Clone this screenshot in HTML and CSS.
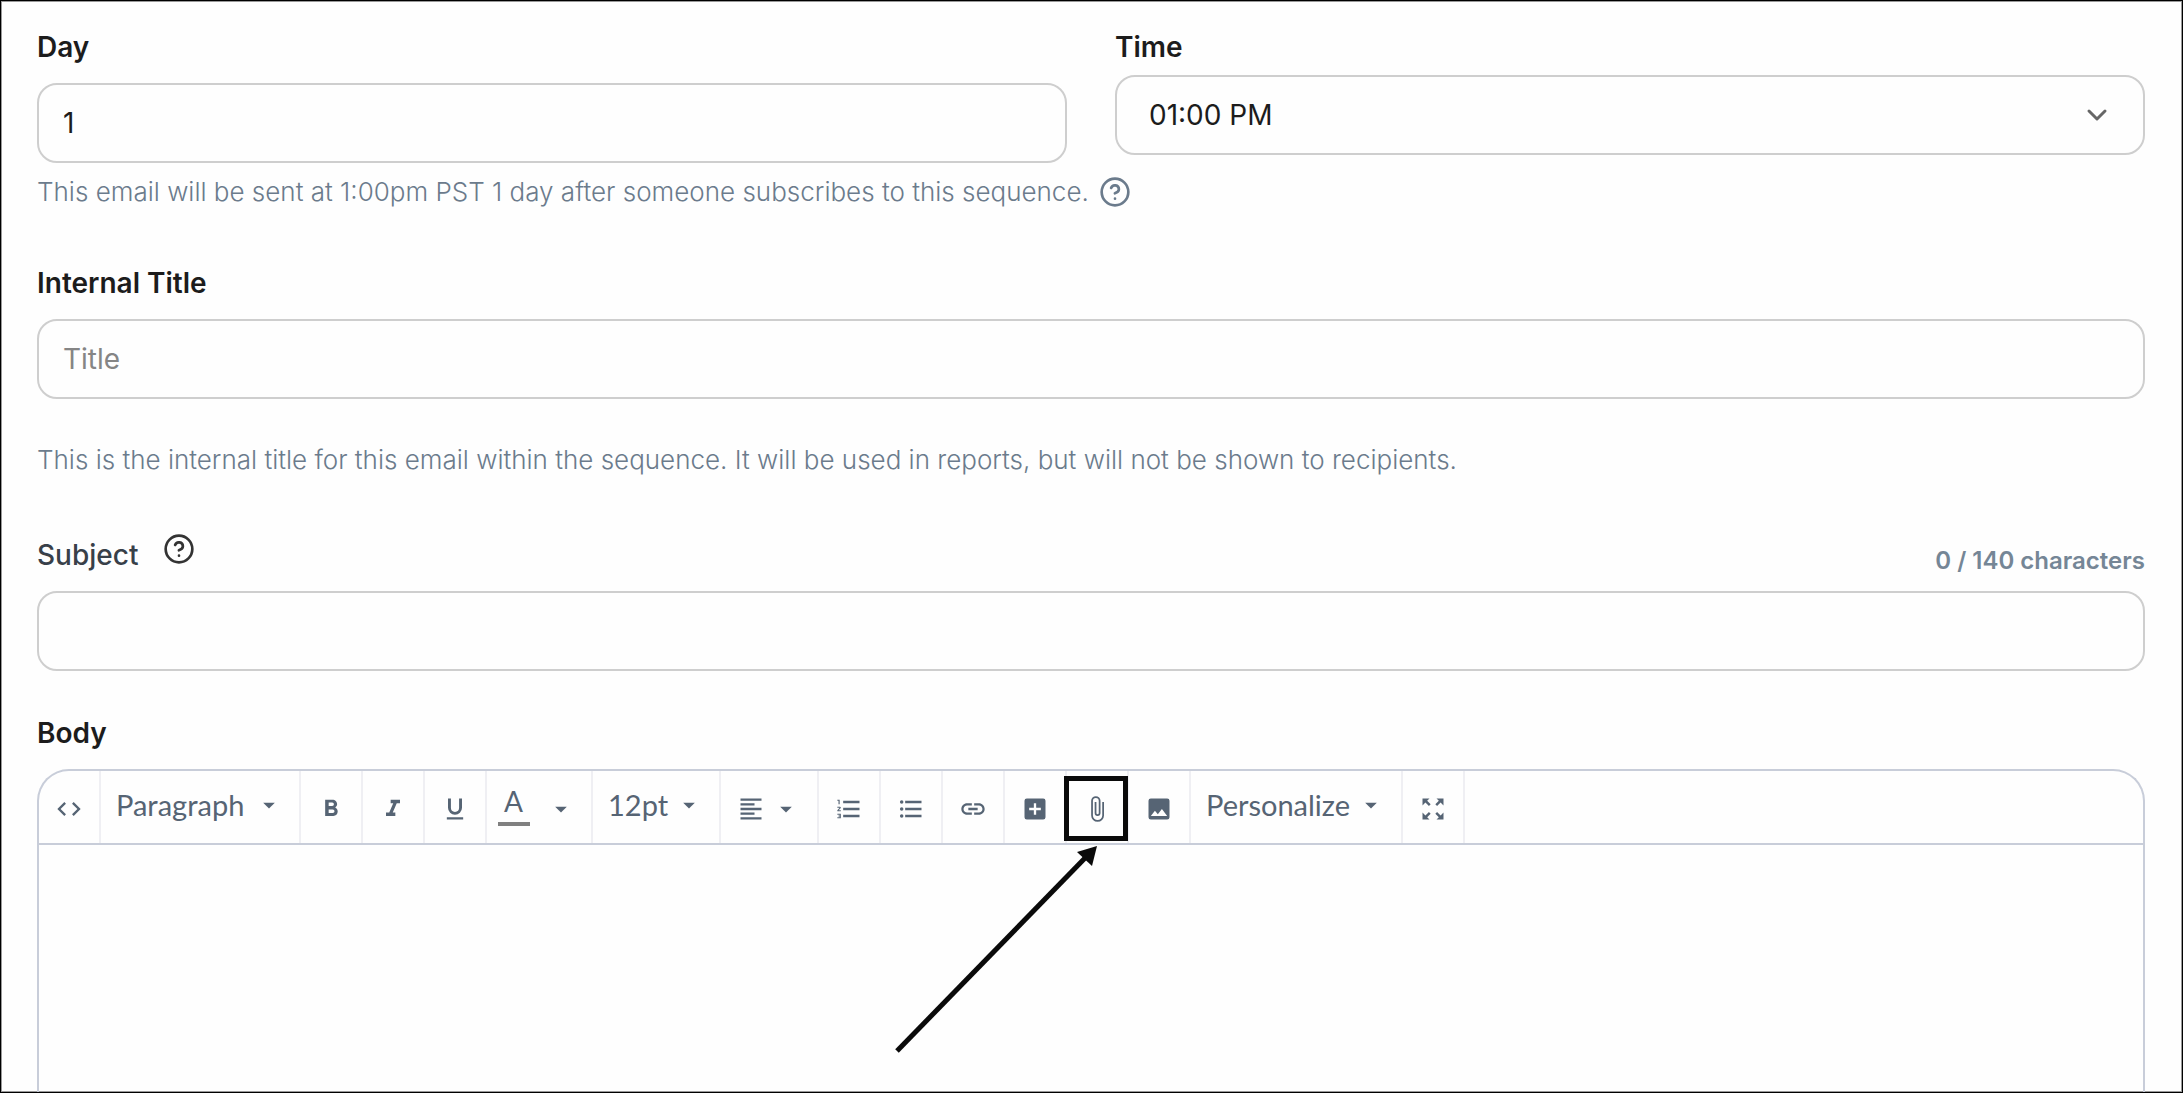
FILE: index.html
```html
<!DOCTYPE html>
<html lang="en">
<head>
    <meta charset="UTF-8">
    <meta name="viewport" content="width=device-width, initial-scale=1.0">
    <title>Sequence Email</title>
    <link rel="stylesheet" href="styles.css">
</head>
<body>
    <form class="page">
        <div class="schedule">
            <div class="field">
                <label for="day">Day</label>
                <input type="text" id="day" class="control" inputmode="numeric" value="1">
            </div>
            <div class="field field-tight">
                <label for="time">Time</label>
                <div class="select-wrap">
                    <select id="time" class="control">
                        <option>01:00 PM</option>
                    </select>
                    <svg class="chevron" viewBox="0 0 24 24"><path d="M4 8l8 8 8-8"/></svg>
                </div>
            </div>
        </div>
        <div class="hint schedule-hint">
            <span>This email will be sent at 1:00pm PST 1 day after someone subscribes to this sequence.</span>
            <button type="button" class="help" aria-label="Schedule help">
                <svg viewBox="0 0 24 24"><circle cx="12" cy="12" r="10"/><path d="M9.09 9a3 3 0 0 1 5.83 1c0 2-3 3-3 3M12 17h.01"/></svg>
            </button>
        </div>

        <div class="field title-field">
            <label for="title">Internal Title</label>
            <input type="text" id="title" class="control" placeholder="Title">
        </div>
        <p class="hint title-hint">This is the internal title for this email within the sequence. It will be used in reports, but will not be shown to recipients.</p>

        <div class="field subject-field">
            <div class="subject-head">
                <label for="subject">Subject</label>
                <button type="button" class="help" aria-label="Subject help">
                    <svg viewBox="0 0 24 24"><circle cx="12" cy="12" r="10"/><path d="M9.09 9a3 3 0 0 1 5.83 1c0 2-3 3-3 3M12 17h.01"/></svg>
                </button>
                <span class="counter">0 / 140 characters</span>
            </div>
            <input type="text" id="subject" class="control" maxlength="140">
        </div>

        <div class="field body-field">
            <label for="body">Body</label>
            <div class="editor">
                <div class="toolbar">
                    <button type="button" class="tool" aria-label="Source code">
                        <svg viewBox="0 0 24 24"><path d="M14.6 16.6l4.6-4.6-4.6-4.6L16 6l6 6-6 6-1.4-1.4zM9.4 16.6L4.8 12l4.6-4.6L8 6l-6 6 6 6 1.4-1.4z"/></svg>
                    </button>
                    <div class="tool-select format">
                        <select aria-label="Block format"><option>Paragraph</option></select>
                        <svg viewBox="0 0 24 24"><path d="M7 10l5 5 5-5z"/></svg>
                    </div>
                    <button type="button" class="tool" aria-label="Bold">
                        <svg viewBox="0 0 24 24"><path d="M13.5 15.5H10v-3h3.5a1.5 1.5 0 0 1 0 3M10 6.5h3a1.5 1.5 0 0 1 0 3h-3m5.6 1.29c.97-.68 1.65-1.79 1.65-2.79 0-2.26-1.75-4-4-4H7v14h7.04c2.1 0 3.71-1.7 3.71-3.79 0-1.52-.86-2.82-2.15-3.42z"/></svg>
                    </button>
                    <button type="button" class="tool" aria-label="Italic">
                        <svg viewBox="0 0 24 24"><path d="M10 4v3h2.21l-3.42 8H6v3h8v-3h-2.21l3.42-8H18V4z"/></svg>
                    </button>
                    <button type="button" class="tool" aria-label="Underline">
                        <svg viewBox="0 0 24 24"><path d="M5 21h14v-2H5v2m7-4a6 6 0 0 0 6-6V3h-2.5v8a3.5 3.5 0 0 1-7 0V3H6v8a6 6 0 0 0 6 6z"/></svg>
                    </button>
                    <button type="button" class="tool color" aria-label="Text color">
                        <span class="swatch">A</span>
                        <svg viewBox="0 0 24 24"><path d="M7 10l5 5 5-5z"/></svg>
                    </button>
                    <div class="tool-select size">
                        <select aria-label="Font size"><option>12pt</option></select>
                        <svg viewBox="0 0 24 24"><path d="M7 10l5 5 5-5z"/></svg>
                    </div>
                    <button type="button" class="tool align" aria-label="Align">
                        <svg viewBox="0 0 24 24"><path d="M3 3h18v2H3zM3 7h12v2H3zM3 11h18v2H3zM3 15h12v2H3zM3 19h18v2H3z"/></svg>
                        <svg viewBox="0 0 24 24"><path d="M7 10l5 5 5-5z"/></svg>
                    </button>
                    <button type="button" class="tool" aria-label="Numbered list">
                        <svg viewBox="0 0 24 24"><path d="M7 13v-2h14v2H7m0 6v-2h14v2H7M7 7V5h14v2H7M3 8V5H2V4h2v4H3m-1 9v-1h3v4H2v-1h2v-.5H3v-1h1V17H2m2.25-7a.75.75 0 0 1 .54 1.27L3.12 13H5v1H2v-.92L4 11H2v-1h2.25z"/></svg>
                    </button>
                    <button type="button" class="tool" aria-label="Bullet list">
                        <svg viewBox="0 0 24 24"><path d="M7 5h14v2H7zM7 11h14v2H7zM7 17h14v2H7z"/><circle cx="4" cy="6" r="1.5"/><circle cx="4" cy="12" r="1.5"/><circle cx="4" cy="18" r="1.5"/></svg>
                    </button>
                    <button type="button" class="tool" aria-label="Link">
                        <svg viewBox="0 0 24 24"><path d="M3.9 12c0-1.71 1.39-3.1 3.1-3.1h4V7H7c-2.76 0-5 2.24-5 5s2.24 5 5 5h4v-1.9H7c-1.71 0-3.1-1.39-3.1-3.1zM8 13h8v-2H8v2zm9-6h-4v1.9h4c1.71 0 3.1 1.39 3.1 3.1s-1.39 3.1-3.1 3.1h-4V17h4c2.76 0 5-2.24 5-5s-2.24-5-5-5z"/></svg>
                    </button>
                    <button type="button" class="tool" aria-label="Insert">
                        <svg viewBox="0 0 24 24"><path d="M17 13h-4v4h-2v-4H7v-2h4V7h2v4h4m2-8H5a2 2 0 0 0-2 2v14a2 2 0 0 0 2 2h14a2 2 0 0 0 2-2V5a2 2 0 0 0-2-2z"/></svg>
                    </button>
                    <button type="button" class="tool attach" aria-label="Attach file">
                        <svg viewBox="0 0 24 24"><path d="M16.5 6v11.5a4 4 0 0 1-8 0V5a2.5 2.5 0 0 1 5 0v10.5a1 1 0 0 1-2 0V6H10v9.5a2.5 2.5 0 0 0 5 0V5a4 4 0 0 0-8 0v12.5a5.5 5.5 0 0 0 11 0V6z"/></svg>
                        <!-- pointer to the attachment button -->
                        <svg class="arrow" viewBox="0 0 204 208"><path class="arrow-line" d="M4 205L194 10"/><path d="M204 0l-5 20-15-14z"/></svg>
                    </button>
                    <button type="button" class="tool" aria-label="Image">
                        <svg viewBox="0 0 24 24"><path d="M8.5 13.5l2.5 3 3.5-4.5 4.5 6H5m16 1V5a2 2 0 0 0-2-2H5a2 2 0 0 0-2 2v14a2 2 0 0 0 2 2h14a2 2 0 0 0 2-2z"/></svg>
                    </button>
                    <div class="tool-select personalize">
                        <select aria-label="Personalize"><option>Personalize</option></select>
                        <svg viewBox="0 0 24 24"><path d="M7 10l5 5 5-5z"/></svg>
                    </div>
                    <button type="button" class="tool" aria-label="Fullscreen">
                        <svg viewBox="0 0 24 24"><path d="M3 3h6L7 5l3 3-1.5 1.5-3-3L3 9zM21 3h-6l2 2-3 3 1.5 1.5 3-3L21 9zM3 21h6l-2-2 3-3-1.5-1.5-3 3L3 15zM21 21h-6l2-2-3-3 1.5-1.5 3 3L21 15z"/></svg>
                    </button>
                </div>
                <textarea id="body"></textarea>
            </div>
        </div>
    </form>
</body>
</html>
```

FILE: styles.css
```css
/* General Styles */
* {
    box-sizing: border-box;
}

body {
    margin: 0;
    font-family: 'Inter', sans-serif;
    font-size: 28px;
    line-height: 36px;
    color: #1c1c1c;
    background: #fefefe;
}

button, input, select, textarea {
    font: inherit;
    color: inherit;
}

button {
    border: none;
    background: none;
    padding: 0;
    cursor: pointer;
}

.page {
    display: flex;
    flex-direction: column;
    min-height: 100vh;
    padding: 28px 37px 0 36px;
    border: 1px solid #000;
    box-shadow: inset 0 0 0 1px #999;
}

/* Fields */
.schedule {
    display: grid;
    grid-template-columns: 1fr 1fr;
    gap: 48px;
    align-items: start;
}

.field {
    display: flex;
    flex-direction: column;
    gap: 18px;
}

.field-tight {
    gap: 10px;
}

label {
    font-weight: 600;
}

.control {
    width: 100%;
    height: 80px;
    padding: 0 24px;
    border: 2px solid #cecece;
    border-radius: 20px;
    background: #fefefe;
    appearance: none;
}

.control::placeholder {
    color: #858585;
}

.select-wrap {
    display: grid;
    align-items: center;
}

.select-wrap .control {
    grid-area: 1 / 1;
    padding: 0 32px;
}

.chevron {
    grid-area: 1 / 1;
    justify-self: end;
    width: 24px;
    height: 24px;
    margin-right: 36px;
    fill: none;
    stroke: #666;
    stroke-width: 3;
    stroke-linecap: round;
    stroke-linejoin: round;
    pointer-events: none;
}

.hint {
    margin: 0;
    font-size: 26px;
    font-weight: 300;
    color: #6b7b8c;
}

.schedule-hint {
    display: flex;
    align-items: center;
    gap: 10px;
    margin-top: 11px;
}

.title-field {
    margin-top: 55px;
}

.title-hint {
    margin-top: 43px;
}

.subject-field {
    margin-top: 59px;
}

.body-field {
    flex: 1;
    margin-top: 44px;
}

.help {
    height: 32px;
    color: inherit;
}

.help svg {
    display: block;
    width: 32px;
    height: 32px;
    fill: none;
    stroke: currentColor;
    stroke-width: 2;
    stroke-linecap: round;
    stroke-linejoin: round;
}

.subject-head {
    display: flex;
}

.subject-head label {
    font-weight: 500;
    color: #384049;
}

.subject-head .help {
    margin: -4px 0 0 25px;
    color: #333;
}

.counter {
    align-self: flex-end;
    margin-left: auto;
    font-size: 24px;
    line-height: 24px;
    font-weight: 600;
    color: #758696;
}

/* Editor */
.editor {
    flex: 1;
    display: flex;
    flex-direction: column;
    border: 2px solid #c8cdd9;
    border-bottom: none;
    border-radius: 32px 32px 0 0;
}

.toolbar {
    display: flex;
    flex-wrap: wrap;
    border-bottom: 2px solid #c8cdd9;
    font-family: 'Lato', sans-serif;
    color: #566474;
}

.toolbar svg {
    width: 28px;
    height: 28px;
    fill: currentColor;
}

.tool {
    display: flex;
    justify-content: center;
    align-items: center;
    width: 62px;
    height: 72px;
    padding-top: 4px;
    border-right: 2px solid #efeff3;
}

.tool-select {
    display: grid;
    align-items: center;
    height: 72px;
    padding-bottom: 5px;
    border-right: 2px solid #efeff3;
}

.tool-select select {
    grid-area: 1 / 1;
    width: 100%;
    padding: 0 40px 0 15px;
    border: none;
    background: none;
    font-size: 29px;
    appearance: none;
}

.tool-select svg {
    grid-area: 1 / 1;
    justify-self: end;
    margin-right: 16px;
    pointer-events: none;
}

.format {
    width: 200px;
}

.size {
    width: 128px;
}

.personalize {
    width: 212px;
}

.color {
    width: 106px;
    padding-right: 6px;
    gap: 17px;
}

.swatch {
    width: 32px;
    margin-bottom: 5px;
    padding-bottom: 7px;
    border-bottom: 4px solid #808080;
    line-height: 28px;
}

.align {
    width: 98px;
    padding-right: 2px;
    gap: 7px;
}

/* Highlighted button */
.attach {
    position: relative;
}

.attach::after {
    content: '';
    position: absolute;
    inset: 5px -1px 2px -3px;
    border: 5px solid #0a0a0a;
}

.toolbar .arrow {
    position: absolute;
    top: 75px;
    right: 30px;
    width: 204px;
    height: 208px;
    fill: #0a0a0a;
    pointer-events: none;
}

.arrow-line {
    stroke: #0a0a0a;
    stroke-width: 5;
}

textarea {
    flex: 1;
    width: 100%;
    padding: 24px;
    border: none;
    background: none;
    resize: none;
    outline: none;
}
```
